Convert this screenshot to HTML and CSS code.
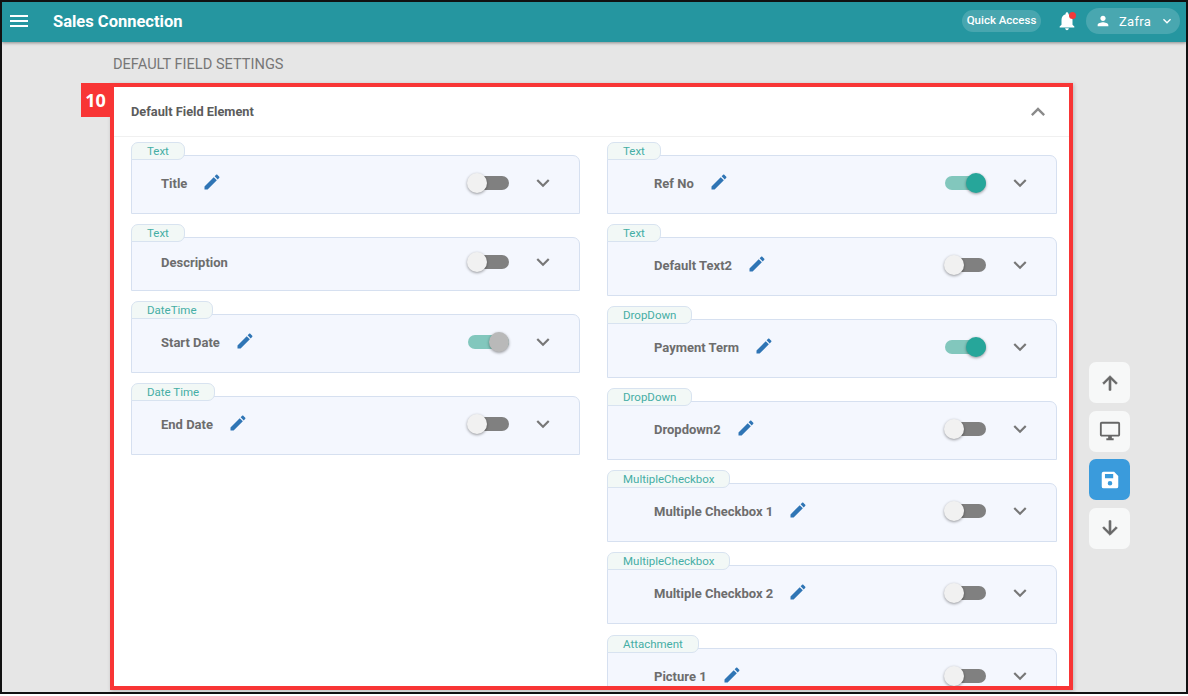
FILE: index.html
```html
<!DOCTYPE html>
<html lang="en">
<head>
    <meta charset="UTF-8">
    <title>Default Field Settings</title>
    <link rel="stylesheet" href="styles.css">
</head>
<body>
<svg class="defs" aria-hidden="true">
    <symbol id="i-edit" viewBox="0 0 24 24"><path d="M3 17.25V21h3.75L17.81 9.94l-3.75-3.75L3 17.25zM20.71 7.04c.39-.39.39-1.02 0-1.41l-2.34-2.34c-.39-.39-1.02-.39-1.41 0l-1.83 1.83 3.75 3.75 1.83-1.83z"/></symbol>
    <symbol id="i-down" viewBox="0 0 24 24"><path d="M7.41 8.59L12 13.17l4.59-4.58L18 10l-6 6-6-6z"/></symbol>
</svg>
<div class="frame">
    <header class="topbar">
        <svg class="menu-icon" viewBox="0 0 18 12"><path d="M0 0h18v2H0zM0 5h18v2H0zM0 10h18v2H0z"/></svg>
        <span class="brand">Sales Connection</span>
        <span class="quick">Quick Access</span>
        <span class="bell">
            <svg viewBox="0 0 24 24"><path d="M12 22c1.100 0 2-.9 2-2h-4c0 1.100.9 2 2 2zm6-6v-5c0-3.070-1.640-5.640-4.500-6.320V4c0-.83-.67-1.500-1.500-1.500s-1.500.67-1.500 1.500v.68C7.630 5.360 6 7.920 6 11v5l-2 2v1h16v-1l-2-2z"/></svg>
            <i class="dot"></i>
        </span>
        <span class="user">
            <svg class="user-icon" viewBox="0 0 24 24"><path d="M12 12c2.210 0 4-1.790 4-4s-1.790-4-4-4-4 1.790-4 4 1.790 4 4 4zm0 2c-2.670 0-8 1.340-8 4v2h16v-2c0-2.660-5.330-4-8-4z"/></svg>
            Zafra
            <svg class="user-caret"><use href="#i-down"/></svg>
        </span>
    </header>

    <main class="page">
        <h1 class="page-title">DEFAULT FIELD SETTINGS</h1>
        <div class="work">
            <div class="panel-wrap">
                <span class="badge">10</span>
                <section class="panel">
                    <div class="panel-head">
                        <h2>Default Field Element</h2>
                        <svg class="collapse" viewBox="0 0 24 24"><path d="M12 8l-6 6 1.410 1.410L12 10.830l4.590 4.580L18 14z"/></svg>
                    </div>
                    <div class="columns">
                        <div class="col col-left">
                            <div class="field">
                                <span class="tag">Text</span>
                                <div class="card">
                                    <span class="name">Title</span>
                                    <svg class="edit"><use href="#i-edit"/></svg>
                                    <span class="toggle"></span>
                                    <svg class="more"><use href="#i-down"/></svg>
                                </div>
                            </div>
                            <div class="field">
                                <span class="tag">Text</span>
                                <div class="card card-short">
                                    <span class="name">Description</span>
                                    <span class="toggle"></span>
                                    <svg class="more"><use href="#i-down"/></svg>
                                </div>
                            </div>
                            <div class="field">
                                <span class="tag">DateTime</span>
                                <div class="card">
                                    <span class="name">Start Date</span>
                                    <svg class="edit"><use href="#i-edit"/></svg>
                                    <span class="toggle on grey"></span>
                                    <svg class="more"><use href="#i-down"/></svg>
                                </div>
                            </div>
                            <div class="field">
                                <span class="tag">Date Time</span>
                                <div class="card">
                                    <span class="name">End Date</span>
                                    <svg class="edit"><use href="#i-edit"/></svg>
                                    <span class="toggle"></span>
                                    <svg class="more"><use href="#i-down"/></svg>
                                </div>
                            </div>
                        </div>
                        <div class="col col-right">
                            <div class="field">
                                <span class="tag">Text</span>
                                <div class="card">
                                    <span class="name">Ref No</span>
                                    <svg class="edit"><use href="#i-edit"/></svg>
                                    <span class="toggle on"></span>
                                    <svg class="more"><use href="#i-down"/></svg>
                                </div>
                            </div>
                            <div class="field">
                                <span class="tag">Text</span>
                                <div class="card">
                                    <span class="name">Default Text2</span>
                                    <svg class="edit"><use href="#i-edit"/></svg>
                                    <span class="toggle"></span>
                                    <svg class="more"><use href="#i-down"/></svg>
                                </div>
                            </div>
                            <div class="field">
                                <span class="tag">DropDown</span>
                                <div class="card">
                                    <span class="name">Payment Term</span>
                                    <svg class="edit"><use href="#i-edit"/></svg>
                                    <span class="toggle on"></span>
                                    <svg class="more"><use href="#i-down"/></svg>
                                </div>
                            </div>
                            <div class="field">
                                <span class="tag">DropDown</span>
                                <div class="card">
                                    <span class="name">Dropdown2</span>
                                    <svg class="edit"><use href="#i-edit"/></svg>
                                    <span class="toggle"></span>
                                    <svg class="more"><use href="#i-down"/></svg>
                                </div>
                            </div>
                            <div class="field">
                                <span class="tag">MultipleCheckbox</span>
                                <div class="card">
                                    <span class="name">Multiple Checkbox 1</span>
                                    <svg class="edit"><use href="#i-edit"/></svg>
                                    <span class="toggle"></span>
                                    <svg class="more"><use href="#i-down"/></svg>
                                </div>
                            </div>
                            <div class="field">
                                <span class="tag">MultipleCheckbox</span>
                                <div class="card">
                                    <span class="name">Multiple Checkbox 2</span>
                                    <svg class="edit"><use href="#i-edit"/></svg>
                                    <span class="toggle"></span>
                                    <svg class="more"><use href="#i-down"/></svg>
                                </div>
                            </div>
                            <div class="field">
                                <span class="tag">Attachment</span>
                                <div class="card">
                                    <span class="name">Picture 1</span>
                                    <svg class="edit"><use href="#i-edit"/></svg>
                                    <span class="toggle"></span>
                                    <svg class="more"><use href="#i-down"/></svg>
                                </div>
                            </div>
                        </div>
                    </div>
                </section>
            </div>

            <div class="actions">
                <button class="action action-arrow" type="button">
                    <svg viewBox="0 0 24 24"><path d="M4 12l1.410 1.410L11 7.830V20h2V7.830l5.580 5.590L20 12l-8-8-8 8z"/></svg>
                </button>
                <button class="action" type="button">
                    <svg viewBox="0 0 24 24"><path d="M21 2H3c-1.100 0-2 .9-2 2v12c0 1.100.9 2 2 2h7v2H8v2h8v-2h-2v-2h7c1.100 0 2-.9 2-2V4c0-1.100-.9-2-2-2zm0 14H3V4h18v12z"/></svg>
                </button>
                <button class="action action-save" type="button">
                    <svg viewBox="0 0 24 24"><path d="M5 3h11.500L21 7.500V19a2 2 0 0 1-2 2H5a2 2 0 0 1-2-2V5a2 2 0 0 1 2-2zm1.500 2.500v4.500h9V5.500h-9zM12 13a2.500 2.500 0 1 0 0 5 2.500 2.500 0 0 0 0-5z"/></svg>
                </button>
                <button class="action action-arrow" type="button">
                    <svg viewBox="0 0 24 24"><path d="M20 12l-1.410-1.410L13 16.170V4h-2v12.170l-5.580-5.590L4 12l8 8 8-8z"/></svg>
                </button>
            </div>
        </div>
    </main>
</div>
</body>
</html>
```
FILE: styles.css
```css
html, body {
    margin: 0;
    padding: 0;
    background-color: #fff;
}

body {
    font-family: Roboto, "Liberation Sans", sans-serif;
    overflow: hidden;
}

.defs {
    display: none;
}

.frame {
    width: 1184px;
    height: 690px;
    border: 2px solid #111;
    background-color: #e6e6e6;
    overflow: hidden;
    display: flex;
    flex-direction: column;
}

.topbar {
    flex: none;
    height: 40px;
    box-sizing: border-box;
    padding-bottom: 2px;
    background-color: #2596a0;
    box-shadow: 0 1px 3px rgba(0, 0, 0, 0.4);
    display: flex;
    align-items: center;
    color: #fff;
    position: relative;
}

.menu-icon {
    width: 18px;
    height: 12px;
    margin-left: 8px;
    fill: #fff;
}

.brand {
    margin-left: 25px;
    font-size: 16.500px;
    font-weight: 700;
}

.quick {
    margin-left: auto;
    height: 22px;
    width: 79px;
    border-radius: 11px;
    background-color: rgba(255, 255, 255, 0.16);
    font-size: 11.500px;
    font-weight: 500;
    line-height: 21px;
    text-align: center;
}

.bell {
    margin-left: 15px;
    width: 22px;
    height: 24px;
    position: relative;
}

.bell svg {
    width: 22px;
    height: 22px;
    margin-top: 1px;
    fill: #fff;
}

.dot {
    position: absolute;
    top: 3px;
    right: 2px;
    width: 7px;
    height: 7px;
    border-radius: 50%;
    background-color: #f03a3a;
}

.user {
    margin-left: 8px;
    margin-right: 6px;
    width: 94px;
    height: 26px;
    border-radius: 13px;
    background-color: rgba(255, 255, 255, 0.17);
    display: flex;
    align-items: center;
    font-size: 13px;
    box-sizing: border-box;
    padding-left: 9px;
    letter-spacing: 0.3px;
}

.user-icon {
    width: 16px;
    height: 16px;
    fill: #fff;
    margin-right: 8px;
}

.user-caret {
    width: 16px;
    height: 16px;
    fill: #fff;
    margin-left: 8px;
}

.page {
    flex: 1;
    min-height: 0;
    padding-left: 108px;
}

.page-title {
    margin: 13px 0 0 3px;
    height: 28px;
    font-size: 14.600px;
    font-weight: 400;
    line-height: 18px;
    color: #777;
}

.work {
    display: flex;
    align-items: flex-start;
}

.panel-wrap {
    position: relative;
    flex: none;
}

.panel {
    width: 963px;
    height: 607px;
    box-sizing: border-box;
    border: 4px solid #f83535;
    background-color: #fff;
    box-shadow: 1px 1px 4px rgba(0, 0, 0, 0.2);
    overflow: hidden;
}

.badge {
    position: absolute;
    left: -29px;
    top: 0;
    width: 29px;
    height: 34px;
    background-color: #f83535;
    color: #fff;
    font-family: "Open Sans", sans-serif;
    font-size: 18px;
    font-weight: 700;
    line-height: 34px;
    text-align: center;
}

.panel-head {
    height: 49px;
    border-bottom: 1px solid #f0f0f0;
    display: flex;
    align-items: center;
    justify-content: space-between;
    padding: 0 17px 0 17px;
}

.panel-head h2 {
    margin: 0;
    font-size: 12.800px;
    font-weight: 700;
    color: #5c5c5c;
}

.collapse {
    width: 28px;
    height: 28px;
    fill: #8a8a8a;
}

.columns {
    display: flex;
    gap: 27px;
    padding: 5px 12px 0 17px;
}

.col {
    flex: 1;
    display: flex;
    flex-direction: column;
    gap: 10px;
}

.col-left {
    flex: 449;
}

.col-right {
    flex: 450;
    gap: 10.100px;
}

.tag {
    display: block;
    width: fit-content;
    height: 18px;
    box-sizing: border-box;
    padding: 0 15px;
    margin-bottom: -5px;
    border: 1px solid #d8e3f0;
    border-radius: 7px 7px 7px 0;
    background-color: #f2f8f6;
    color: #45aea5;
    font-size: 11.500px;
    line-height: 16px;
    position: relative;
    z-index: 1;
}

.card {
    height: 59px;
    box-sizing: border-box;
    border: 1px solid #d6e0f0;
    border-radius: 0 7px 0 0;
    background-color: #f4f7fe;
    display: flex;
    align-items: flex-start;
    padding-top: 16px;
    padding-right: 23px;
}

.card-short {
    height: 54px;
    padding-top: 13px;
}

.col-left .card {
    padding-left: 29px;
}

.col-right .card {
    padding-left: 46px;
}

.name {
    font-size: 13px;
    font-weight: 700;
    line-height: 24px;
    color: #6d6d6d;
}

.edit {
    width: 20px;
    height: 20px;
    margin-left: 15px;
    fill: #2f75b5;
}

.toggle {
    margin-left: auto;
    margin-top: 4px;
    width: 41px;
    height: 14px;
    border-radius: 7px;
    background-color: #808080;
    position: relative;
}

.toggle::after {
    content: "";
    position: absolute;
    left: -1px;
    top: -3px;
    width: 20px;
    height: 20px;
    border-radius: 50%;
    background-color: #f1f1f1;
    box-shadow: 0 1px 3px rgba(0, 0, 0, 0.4);
}

.toggle.on {
    background-color: #82c7bd;
}

.toggle.on::after {
    left: auto;
    right: 0;
    background-color: #26a69a;
}

.toggle.grey::after {
    background-color: #b9b9b9;
}

.more {
    width: 26px;
    height: 26px;
    margin-left: 21px;
    margin-top: -2px;
    fill: #777;
}

.actions {
    margin-left: 16px;
    padding-top: 279px;
    display: flex;
    flex-direction: column;
    gap: 7.500px;
}

.action {
    width: 41px;
    height: 41px;
    padding: 0;
    border: none;
    border-radius: 7px;
    background-color: #f7f8f8;
    display: flex;
    align-items: center;
    justify-content: center;
}

.action svg {
    width: 22px;
    height: 22px;
    fill: #666;
}

.action-arrow svg {
    stroke: #666;
    stroke-width: 0.800px;
}

.action-save {
    background-color: #3a9bdc;
}

.action-save svg {
    fill: #fff;
}
```
